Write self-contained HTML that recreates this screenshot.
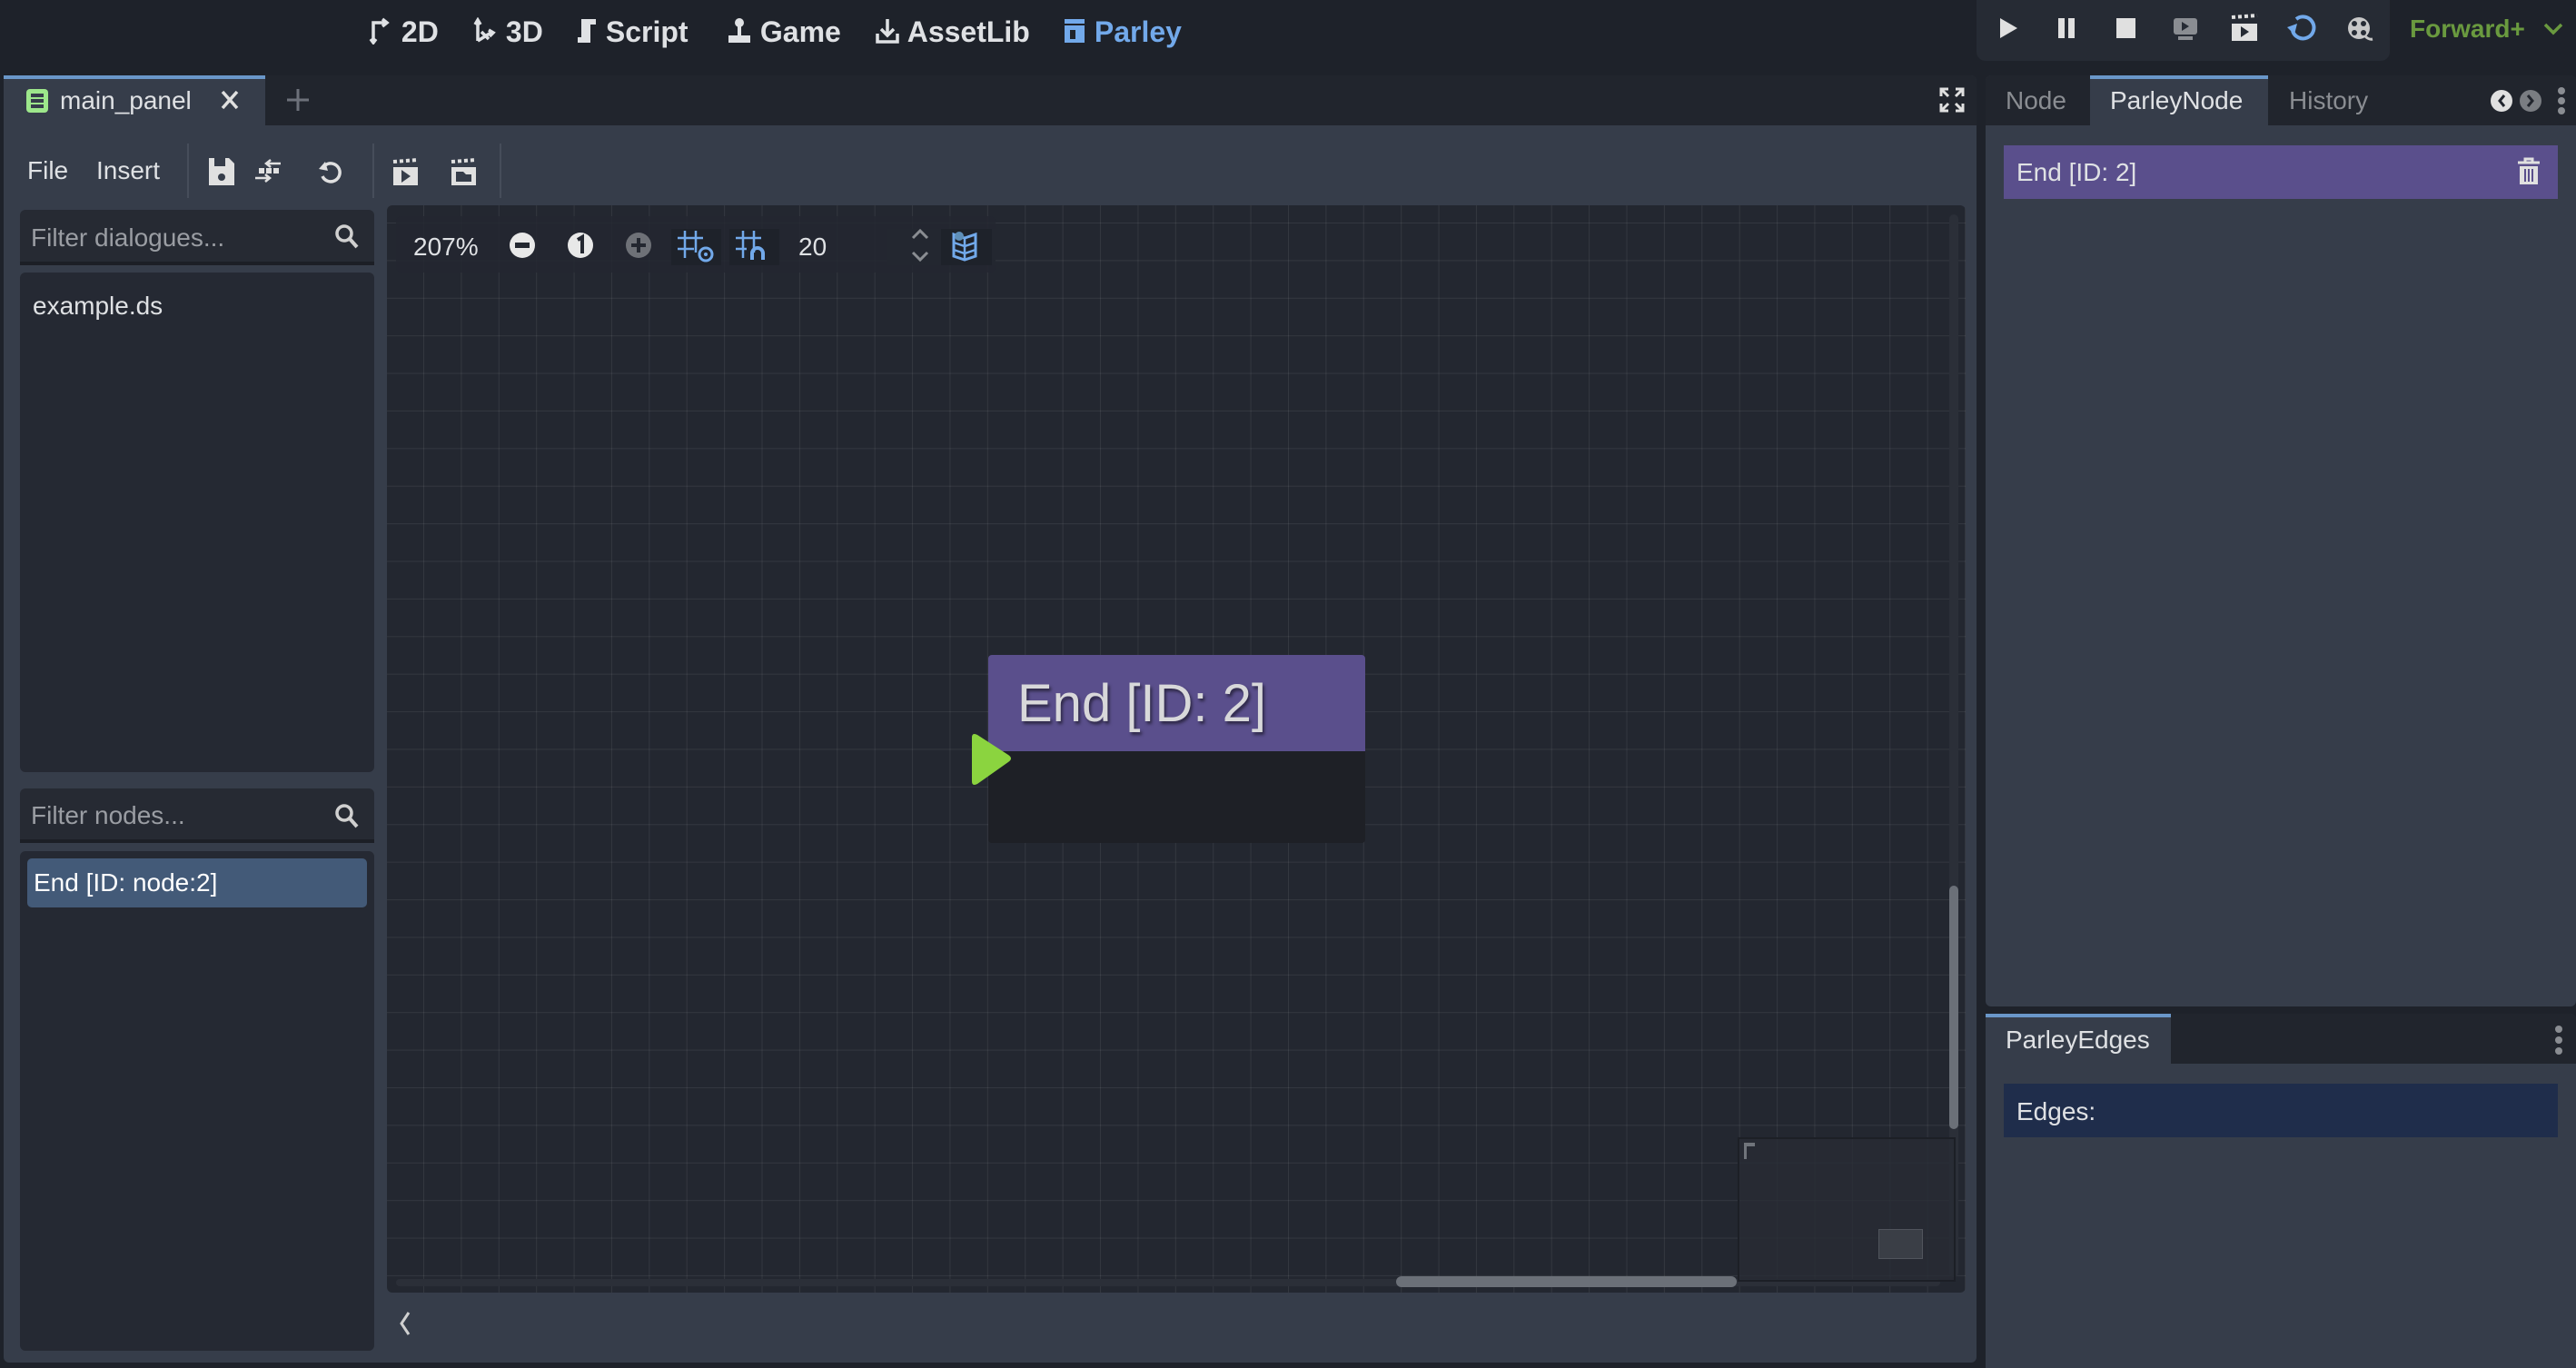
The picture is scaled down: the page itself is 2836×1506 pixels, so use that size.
<!DOCTYPE html>
<html><head><meta charset="utf-8"><style>
*{box-sizing:border-box;margin:0;padding:0}
body{width:2836px;height:1506px;background:#1e222a;font-family:"Liberation Sans",sans-serif;color:#cdcfd2;position:relative;overflow:hidden}
.a{position:absolute}
.t{font-size:28px;white-space:nowrap}
.menu{font-size:32px;font-weight:bold;color:#dfe1e4;top:17px;white-space:nowrap}
.grid{background-color:#232730;background-image:linear-gradient(to right,rgba(255,255,255,0.075) 1px,transparent 1px),linear-gradient(to bottom,rgba(255,255,255,0.075) 1px,transparent 1px);background-size:41.4px 41.4px;background-position:40px 19px}
</style></head><body>
<div class="a menu" style="left:405px"><svg width="28" height="30" viewBox="0 0 28 30" style="vertical-align:-3px"><path d="M6 28V6h14M16 2l5 4-5 4M3 24l3 4 3-4" stroke="#dfe1e4" stroke-width="3.5" fill="none"/></svg> 2D</div>
<div class="a menu" style="left:520px"><svg width="28" height="30" viewBox="0 0 28 30" style="vertical-align:-3px"><path d="M6 26V4M3 8l3-5 3 5M6 26l16-10M18 14l5 3-4 4M10 16l8 8" stroke="#dfe1e4" stroke-width="3.5" fill="none"/></svg> 3D</div>
<div class="a menu" style="left:632px"><svg width="26" height="30" viewBox="0 0 26 30" style="vertical-align:-3px"><path d="M8 2h16v6h-6v20H4v-6h4z" fill="#dfe1e4"/></svg> Script</div>
<div class="a menu" style="left:800px"><svg width="28" height="30" viewBox="0 0 28 30" style="vertical-align:-3px"><circle cx="14" cy="6" r="5" fill="#dfe1e4"/><rect x="12" y="8" width="4" height="12" fill="#dfe1e4"/><rect x="2" y="20" width="24" height="8" fill="#dfe1e4"/></svg> Game</div>
<div class="a menu" style="left:963px"><svg width="28" height="30" viewBox="0 0 28 30" style="vertical-align:-3px"><path d="M14 2v18M7 13l7 7 7-7M3 18v9h22v-9" stroke="#dfe1e4" stroke-width="3.5" fill="none"/></svg> AssetLib</div>
<div class="a menu" style="left:1170px;color:#72a9ea"><svg width="26" height="30" viewBox="0 0 26 30" style="vertical-align:-3px"><rect x="2" y="2" width="22" height="5" fill="#72a9ea"/><rect x="2" y="9" width="22" height="19" fill="#72a9ea"/><rect x="8" y="14" width="6" height="10" fill="#1e222a"/></svg> Parley</div>
<div class="a" style="left:2176px;top:0;width:455px;height:67px;background:#262b34;border-radius:0 0 10px 10px"></div>
<svg class="a" style="left:2176px;top:0" width="455" height="67" viewBox="0 0 455 67">
<path d="M26 20v22l19-11z" fill="#e0e0e0"/>
<rect x="90" y="20" width="7" height="22" fill="#e0e0e0"/><rect x="101" y="20" width="7" height="22" fill="#e0e0e0"/>
<rect x="154" y="20" width="21" height="22" fill="#e0e0e0"/>
<rect x="217" y="20" width="26" height="18" rx="3" fill="#8a8d92"/><path d="M226 24v10l8-5z" fill="#262b34"/><rect x="222" y="40" width="16" height="4" fill="#8a8d92"/>
<rect x="281" y="26" width="28" height="19" fill="#e0e0e0"/><path d="M281 19l28-2" stroke="#e0e0e0" stroke-width="4" stroke-dasharray="4 3"/><path d="M291 29v12l9-6z" fill="#262b34"/>
<path d="M348 34a12 12 0 1 0 4-13" stroke="#72a9ea" stroke-width="4" fill="none"/><path d="M342 30l8 8 3-12z" fill="#72a9ea"/>
<circle cx="421" cy="31" r="12" fill="#c8c8c8"/><circle cx="416" cy="26" r="3" fill="#262b34"/><circle cx="426" cy="26" r="3" fill="#262b34"/><circle cx="416" cy="36" r="3" fill="#262b34"/><circle cx="426" cy="36" r="3" fill="#262b34"/><path d="M428 40q4 4 8 3" stroke="#c8c8c8" stroke-width="3" fill="none"/>
</svg>
<div class="a" style="left:2653px;top:16px;font-size:28px;font-weight:bold;color:#6a9a3f">Forward+</div>
<svg class="a" style="left:2800px;top:24px" width="22" height="16"><path d="M2 3l9 9 9-9" stroke="#6a9a3f" stroke-width="3.5" fill="none"/></svg>

<div class="a" style="left:4px;top:83px;width:2172px;height:1417px;background:#363d4a;border-radius:6px"></div>
<div class="a" style="left:292px;top:83px;width:1884px;height:55px;background:#21252d;border-radius:0 6px 0 0"></div>
<div class="a" style="left:4px;top:83px;width:288px;height:4px;background:#6a97c9"></div>
<svg class="a" style="left:28px;top:97px" width="26" height="28"><rect x="1" y="1" width="24" height="26" rx="4" fill="#9de78b"/><rect x="6" y="6" width="14" height="4" fill="#363d4a"/><rect x="6" y="12" width="14" height="4" fill="#363d4a"/><rect x="6" y="18" width="14" height="4" fill="#363d4a"/></svg>
<div class="a t" style="left:66px;top:95px;color:#dfe1e4">main_panel</div>
<svg class="a" style="left:242px;top:98px" width="22" height="24"><path d="M3 3l16 18M19 3L3 21" stroke="#e0e0e0" stroke-width="3.5"/></svg>
<svg class="a" style="left:314px;top:96px" width="28" height="28"><path d="M14 2v24M2 14h24" stroke="#6d717a" stroke-width="3"/></svg>
<svg class="a" style="left:2134px;top:95px" width="30" height="30"><path d="M3 11V3h8M19 3h8v8M27 19v8h-8M11 27H3v-8M4 4l7 7M26 4l-7 7M26 26l-7-7M4 26l7-7" stroke="#e0e0e0" stroke-width="3" fill="none"/></svg>

<div class="a t" style="left:30px;top:172px;color:#dfe1e4">File</div>
<div class="a t" style="left:106px;top:172px;color:#dfe1e4">Insert</div>
<div class="a" style="left:206px;top:158px;width:2px;height:60px;background:#464d5a"></div>
<div class="a" style="left:410px;top:158px;width:2px;height:60px;background:#464d5a"></div>
<div class="a" style="left:550px;top:158px;width:2px;height:60px;background:#464d5a"></div>
<svg class="a" style="left:228px;top:172px" width="300" height="34" viewBox="0 0 300 34">
<path d="M2 2h22l6 6v24H2z" fill="#e0e0e0"/><rect x="8" y="2" width="12" height="9" fill="#363d4a"/><circle cx="16" cy="23" r="4" fill="#363d4a"/>
<path d="M70 4l-5 4 5 4M65 8h16M64 28l5-4-5-4M69 24H53" stroke="#e0e0e0" stroke-width="2.5" fill="none"/><rect x="65" y="13" width="6" height="6" fill="#e0e0e0"/><rect x="73" y="13" width="6" height="6" fill="#e0e0e0"/><rect x="57" y="13" width="6" height="6" fill="#e0e0e0"/>
<path d="M130 10a10 10 0 1 1-3 12" stroke="#e0e0e0" stroke-width="3.5" fill="none"/><path d="M123 14l7-8 3 10z" fill="#e0e0e0"/>
<rect x="205" y="12" width="27" height="20" fill="#e0e0e0"/><path d="M205 6l27-2" stroke="#e0e0e0" stroke-width="4" stroke-dasharray="4 3"/><path d="M214 15v14l10-7z" fill="#363d4a"/>
<rect x="269" y="12" width="27" height="20" fill="#e0e0e0"/><path d="M269 6l27-2" stroke="#e0e0e0" stroke-width="4" stroke-dasharray="4 3"/><path d="M274 17h8l3 3h6v8h-17z" fill="#363d4a"/>
</svg>

<div class="a" style="left:22px;top:231px;width:390px;height:61px;background:#262a33;border-radius:6px 6px 0 0;border-bottom:4px solid #1c1f26"></div>
<div class="a t" style="left:34px;top:246px;color:#9a9da3">Filter dialogues...</div>
<svg class="a" style="left:368px;top:246px" width="28" height="30"><circle cx="11" cy="11" r="8" stroke="#d0d0d0" stroke-width="3.5" fill="none"/><path d="M17 17l8 9" stroke="#d0d0d0" stroke-width="4"/></svg>
<div class="a" style="left:22px;top:300px;width:390px;height:550px;background:#252933;border-radius:6px"></div>
<div class="a t" style="left:36px;top:321px;color:#dfe1e4">example.ds</div>
<div class="a" style="left:22px;top:868px;width:390px;height:60px;background:#262a33;border-radius:6px 6px 0 0;border-bottom:4px solid #1c1f26"></div>
<div class="a t" style="left:34px;top:882px;color:#9a9da3">Filter nodes...</div>
<svg class="a" style="left:368px;top:884px" width="28" height="30"><circle cx="11" cy="11" r="8" stroke="#d0d0d0" stroke-width="3.5" fill="none"/><path d="M17 17l8 9" stroke="#d0d0d0" stroke-width="4"/></svg>
<div class="a" style="left:22px;top:937px;width:390px;height:550px;background:#252933;border-radius:6px"></div>
<div class="a" style="left:30px;top:945px;width:374px;height:54px;background:#435a78;border-radius:5px"></div>
<div class="a t" style="left:37px;top:956px;color:#ffffff">End [ID: node:2]</div>

<div class="a grid" style="left:426px;top:226px;width:1738px;height:1197px;border-radius:6px"></div>
<div class="a" style="left:436px;top:238px;width:660px;height:62px;background:rgba(35,39,48,0.85);border-radius:6px"></div>
<div class="a t" style="left:455px;top:256px;color:#dfe1e4">207%</div>
<svg class="a" style="left:556px;top:252px" width="540" height="40" viewBox="0 0 540 40">
<circle cx="19" cy="18" r="14" fill="#e8e8e8"/><rect x="11" y="15" width="16" height="6" fill="#232730"/>
<circle cx="83" cy="18" r="14" fill="#e8e8e8"/><path d="M80 12l5-3v18" stroke="#232730" stroke-width="4" fill="none"/>
<circle cx="147" cy="18" r="14" fill="#6e7177"/><path d="M147 10v16M139 18h16" stroke="#232730" stroke-width="4"/>
<rect x="183" y="-12" width="55" height="60" rx="6" fill="#1e222a"/>
<path d="M198 2v30M210 2v24M190 10h28M190 22h18" stroke="#72a9ea" stroke-width="2.5"/><circle cx="221" cy="28" r="7" stroke="#72a9ea" stroke-width="3" fill="none"/><circle cx="221" cy="28" r="2" fill="#72a9ea"/>
<rect x="247" y="-12" width="55" height="60" rx="6" fill="#1e222a"/>
<path d="M262 2v30M274 2v24M254 10h28M254 22h12" stroke="#72a9ea" stroke-width="2.5"/><path d="M272 34v-7a6 6 0 0 1 12 0v7" stroke="#72a9ea" stroke-width="4" fill="none"/>
<rect x="420" y="-12" width="140" height="60" fill="#232730"/>
<path d="M449 10l8-8 8 8M449 26l8 8 8-8" stroke="#8a8d92" stroke-width="3" fill="none"/>
<rect x="480" y="-12" width="56" height="60" rx="6" fill="#1e222a"/>
<path d="M494 6l12 4 12-4v24l-12 4-12-4z" stroke="#72a9ea" stroke-width="3" fill="none"/><path d="M494 15l12 4 12-4M494 23l12 4 12-4M506 10v24" stroke="#72a9ea" stroke-width="2.5" fill="none"/><circle cx="500" cy="8" r="5" fill="#5f8fb8"/>
</svg>
<div class="a t" style="left:879px;top:256px;color:#dfe1e4">20</div>

<div class="a" style="left:1088px;top:721px;width:415px;height:207px;background:#1e2026;border-radius:4px"></div>
<div class="a" style="left:1088px;top:721px;width:415px;height:106px;background:#5a4f8c;border-radius:4px 4px 0 0"></div>
<div class="a" style="left:1120px;top:741px;font-size:58px;color:#d8d8da;text-shadow:2px 3px 3px rgba(0,0,0,0.5);white-space:nowrap">End [ID: 2]</div>
<svg class="a" style="left:1062px;top:804px" width="56" height="66"><path d="M8 8q0-6 6-3l34 22q6 4 0 8L14 59q-6 3-6-3z" fill="#8bd43f"/></svg>

<div class="a" style="left:2146px;top:236px;width:10px;height:1170px;background:#2b2f38;border-radius:5px"></div>
<div class="a" style="left:2146px;top:975px;width:10px;height:268px;background:#6b7078;border-radius:5px"></div>
<div class="a" style="left:436px;top:1408px;width:1700px;height:8px;background:#2b2f38;border-radius:4px"></div>
<div class="a" style="left:1537px;top:1405px;width:375px;height:12px;background:#6b7078;border-radius:6px"></div>
<div class="a" style="left:1913px;top:1252px;width:240px;height:159px;background:rgba(40,44,53,0.8);border:2px solid #1c1f26"></div>
<div class="a" style="left:1920px;top:1258px;width:12px;height:4px;background:#70747b"></div>
<div class="a" style="left:1920px;top:1258px;width:3px;height:18px;background:#70747b"></div>
<div class="a" style="left:2068px;top:1353px;width:49px;height:33px;background:#3a3e46;border:1px solid #50545c"></div>
<svg class="a" style="left:436px;top:1442px" width="20" height="30"><path d="M14 3l-8 12 8 12" stroke="#d0d0d0" stroke-width="3" fill="none"/></svg>

<div class="a" style="left:2186px;top:83px;width:650px;height:1025px;background:#363d4a;border-radius:6px"></div>
<div class="a" style="left:2186px;top:83px;width:650px;height:55px;background:#21252d;border-radius:6px 6px 0 0"></div>
<div class="a" style="left:2301px;top:83px;width:196px;height:55px;background:#363d4a"></div>
<div class="a" style="left:2301px;top:83px;width:196px;height:4px;background:#6a97c9"></div>
<div class="a t" style="left:2208px;top:95px;color:#8a8d92">Node</div>
<div class="a t" style="left:2323px;top:95px;color:#dfe1e4">ParleyNode</div>
<div class="a t" style="left:2520px;top:95px;color:#8a8d92">History</div>
<svg class="a" style="left:2742px;top:96px" width="90" height="34"><circle cx="12" cy="15" r="12" fill="#e0e0e0"/><path d="M15 9l-5 6 5 6" stroke="#21252d" stroke-width="3" fill="none"/><circle cx="44" cy="15" r="12" fill="#7a7d82"/><path d="M41 9l5 6-5 6" stroke="#21252d" stroke-width="3" fill="none"/><circle cx="78" cy="4" r="4" fill="#8a8d92"/><circle cx="78" cy="15" r="4" fill="#8a8d92"/><circle cx="78" cy="26" r="4" fill="#8a8d92"/></svg>
<div class="a" style="left:2206px;top:160px;width:610px;height:59px;background:#5a4f8c"></div>
<div class="a t" style="left:2220px;top:174px;color:#dfe1e4">End [ID: 2]</div>
<svg class="a" style="left:2769px;top:173px" width="30" height="34"><path d="M3 6h24M11 6V2h8v4" stroke="#e0e0e0" stroke-width="3" fill="none"/><path d="M5 10h20v20H5z" fill="#e0e0e0"/><path d="M11 13v14M15 13v14M19 13v14" stroke="#5a4f8c" stroke-width="2"/></svg>

<div class="a" style="left:2186px;top:1116px;width:650px;height:390px;background:#363d4a;border-radius:6px 6px 0 0"></div>
<div class="a" style="left:2390px;top:1116px;width:446px;height:55px;background:#21252d;border-radius:0 6px 0 0"></div>
<div class="a" style="left:2186px;top:1116px;width:204px;height:4px;background:#6a97c9"></div>
<div class="a t" style="left:2208px;top:1129px;color:#dfe1e4">ParleyEdges</div>
<svg class="a" style="left:2812px;top:1128px" width="10" height="36"><circle cx="5" cy="5" r="4" fill="#8a8d92"/><circle cx="5" cy="17" r="4" fill="#8a8d92"/><circle cx="5" cy="29" r="4" fill="#8a8d92"/></svg>
<div class="a" style="left:2206px;top:1193px;width:610px;height:59px;background:#1f2d4b"></div>
<div class="a t" style="left:2220px;top:1208px;color:#dfe1e4">Edges:</div>
</body></html>
